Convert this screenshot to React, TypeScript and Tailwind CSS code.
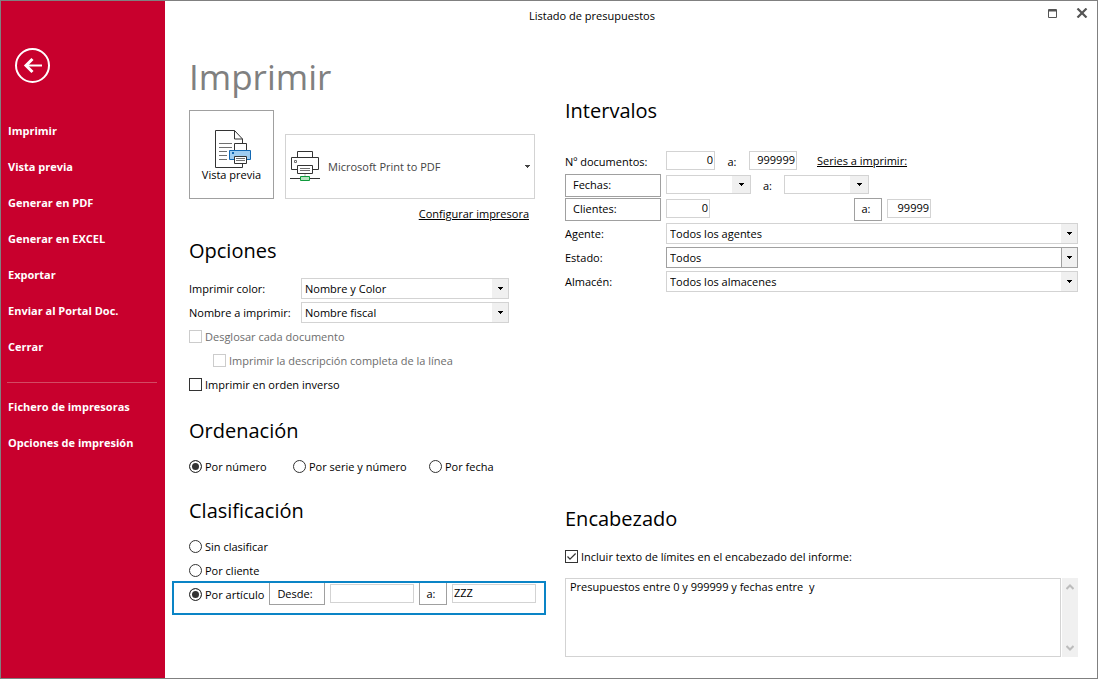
import React from "react";
import clsx from "clsx";

const menuItems = [
  "Imprimir",
  "Vista previa",
  "Generar en PDF",
  "Generar en EXCEL",
  "Exportar",
  "Enviar al Portal Doc.",
  "Cerrar",
];

const setupItems = ["Fichero de impresoras", "Opciones de impresión"];

interface SectionTitleProps {
  children: React.ReactNode;
}

const SectionTitle: React.FC<SectionTitleProps> = ({ children }) => (
  <h2 className="h-8 text-xl leading-8 whitespace-nowrap">{children}</h2>
);

const CaretIcon: React.FC<{ className?: string }> = ({ className }) => (
  <svg
    className={className}
    width="5"
    height="3"
    viewBox="0 0 5 3"
    shapeRendering="crispEdges"
    aria-hidden="true"
  >
    <path d="M0 0h5v1H0zM1 1h3v1H1zM2 2h1v1H2z" fill="currentColor" />
  </svg>
);

interface SelectBoxProps {
  id?: string;
  label?: string;
  value?: string;
  active?: boolean;
  className?: string;
}

const SelectBox: React.FC<SelectBoxProps> = ({
  id,
  label,
  value = "",
  active,
  className,
}) => (
  <div
    className={clsx(
      "relative flex border bg-white",
      active ? "border-[#a0a0a0]" : "border-[#d3d3d3]",
      className
    )}
  >
    <select
      id={id}
      aria-label={label}
      defaultValue={value}
      className="w-full appearance-none bg-transparent pl-[3px] outline-none"
    >
      <option value={value}>{value}</option>
    </select>
    <span
      className={clsx(
        "pointer-events-none absolute inset-y-0 right-0 flex items-center justify-center bg-[#f0f0f0]",
        value ? "w-4" : "w-[18px]",
        active && "border-l border-[#a0a0a0]"
      )}
    >
      <CaretIcon />
    </span>
  </div>
);

interface TextFieldProps {
  label: string;
  value?: string;
  className?: string;
}

const TextField: React.FC<TextFieldProps> = ({ label, value, className }) => (
  <input
    type="text"
    aria-label={label}
    defaultValue={value}
    className={clsx(
      "mb-px h-[19px] border border-[#d3d3d3] bg-white px-px pb-[3px] outline-none",
      className
    )}
  />
);

interface CheckProps {
  label: string;
  checked?: boolean;
  disabled?: boolean;
  className?: string;
}

const Check: React.FC<CheckProps> = ({
  label,
  checked,
  disabled,
  className,
}) => (
  <label
    className={clsx(
      "flex h-6 items-center gap-[3px] whitespace-nowrap",
      disabled && "text-[#6d6d6d]",
      className
    )}
  >
    <span className="relative mb-px flex">
      <input
        type="checkbox"
        defaultChecked={checked}
        disabled={disabled}
        className="peer size-[13px] appearance-none border border-[#333333] disabled:border-[#cccccc]"
      />
      <svg
        className="pointer-events-none absolute inset-0 hidden peer-checked:block"
        viewBox="0 0 13 13"
        fill="none"
        stroke="#333333"
        strokeWidth="1.2"
        aria-hidden="true"
      >
        <path d="M2.5 6.5 5 9.2l5.6-5.7" />
      </svg>
    </span>
    {label}
  </label>
);

interface RadioProps {
  name: string;
  label: string;
  checked?: boolean;
}

const Radio: React.FC<RadioProps> = ({ name, label, checked }) => (
  <label className="flex h-6 items-center gap-[3px] whitespace-nowrap">
    <input
      type="radio"
      name={name}
      defaultChecked={checked}
      className="mb-px size-[13px] appearance-none rounded-full border border-[#333333] bg-white checked:bg-[#333333] checked:shadow-[inset_0_0_0_2px_white]"
    />
    {label}
  </label>
);

const PreviewIcon = () => (
  <svg
    className="ml-[3px] shrink-0"
    width="36"
    height="38"
    viewBox="1 1 36 38"
    fill="none"
    aria-hidden="true"
  >
    <path d="M28.5 14V10l-8-8.5h-19v37h27V34" stroke="#333333" />
    <path d="M20.5 1.5V10h8" stroke="#333333" />
    <path d="M5 14.5h13M5 18.5h13M5 22.5h8M5 26.5h8M5 30.5h8" stroke="#707070" />
    <path d="M20.5 14.5h12v8h-12z" fill="white" stroke="#333333" />
    <path d="M15.5 21.5h21v9h-21z" fill="#9fcdf1" stroke="#1268b3" />
    <path d="M18 23h2v2h-2z" fill="#1268b3" />
    <path d="M20.5 27.5h12v7h-12z" fill="white" stroke="#333333" />
    <path d="M22 29.5h9M22 31.5h9" stroke="#707070" />
  </svg>
);

const PrinterIcon = () => (
  <svg width="30" height="31" viewBox="0 1 30 31" fill="none" aria-hidden="true">
    <path d="M7.5 7V1.5h15V7" stroke="#333333" />
    <path d="M7.5 19.5h-6v-12h27v12h-6" stroke="#333333" />
    <path d="M4.5 10.5h2v2h-2z" stroke="#707070" />
    <path d="M7.5 15.5h15v8h-15z" fill="white" stroke="#333333" />
    <path d="M10 18.5h10M10 20.5h10" stroke="#707070" />
    <path d="M15 24v2" stroke="#b5b5b5" />
    <path d="M0 28.5h10M20 28.5h10" stroke="#333333" />
    <path d="M10.5 26.5h9v4h-9z" fill="#b5e3bf" stroke="#0f9a3c" />
  </svg>
);

const Sidebar = () => (
  <nav className="w-[164px] shrink-0 bg-[#c8002d] pt-[46px] text-white">
    <button type="button" aria-label="Volver" className="ml-[13px] block">
      <svg width="37" height="37" viewBox="0 0 37 37" fill="none" stroke="white">
        <circle cx="18.5" cy="18.5" r="16.5" strokeWidth="2" />
        <path d="M12 18.5h16" strokeWidth="2" />
        <path d="M18.5 12 12 18.5l6.5 6.5" strokeWidth="3" />
      </svg>
    </button>
    <ul className="mt-[29px] text-[11px] font-bold">
      {menuItems.map((item) => (
        <li key={item}>
          <a href="#" className="flex h-9 items-center pl-[7px]">
            {item}
          </a>
        </li>
      ))}
    </ul>
    <hr className="mt-[17px] mr-2 mb-[6px] ml-[6px] border-[#d34a63]" />
    <ul className="text-[11px] font-bold">
      {setupItems.map((item) => (
        <li key={item}>
          <a href="#" className="flex h-9 items-center pl-[7px]">
            {item}
          </a>
        </li>
      ))}
    </ul>
  </nav>
);

const TitleBar = () => (
  <header className="flex h-[30px] items-center">
    <p className="flex-1 text-center">Listado de presupuestos</p>
    <div className="flex w-[78px] items-center justify-end gap-[19px] pr-[9px] pb-[6px]">
      <button type="button" aria-label="Maximizar">
        <svg width="9" height="9" viewBox="0 0 9 9" fill="none" stroke="#555555">
          <path d="M.5.5h8v8h-8zM0 1.5h9M0 2h9" />
        </svg>
      </button>
      <button type="button" aria-label="Cerrar ventana">
        <svg width="12" height="10" viewBox="0 0 12 10" fill="none" stroke="#555555" strokeWidth="2.2">
          <path d="m1.5.5 9 9M10.5.5l-9 9" />
        </svg>
      </button>
    </div>
  </header>
);

const PrintOptions = () => (
  <div>
    <h1 className="mt-[22px] h-12 text-[35px] leading-[48px] text-[#808080]">
      Imprimir
    </h1>
    <div className="mt-[9px] flex items-end gap-[11px]">
      <button
        type="button"
        className="flex h-[89px] w-[85px] flex-col items-center border border-[#a0a0a0] pt-[19px] leading-[14px] whitespace-nowrap"
      >
        <PreviewIcon />
        Vista previa
      </button>
      <button
        type="button"
        className="flex h-[65px] w-[250px] items-center border border-[#d3d3d3] pr-[4px] pl-[4px] text-[#444444]"
      >
        <PrinterIcon />
        <span className="ml-2 flex-1 text-left">Microsoft Print to PDF</span>
        <CaretIcon />
      </button>
    </div>
    <div className="mt-[5px] flex w-[340px] justify-end">
      <a href="#" className="leading-5 underline">
        Configurar impresora
      </a>
    </div>

    <section className="mt-[11px]">
      <SectionTitle>Opciones</SectionTitle>
      <div className="mt-[10px] w-[320px]">
        <div className="flex h-6 items-center">
          <label htmlFor="color" className="w-28">
            Imprimir color:
          </label>
          <SelectBox id="color" value="Nombre y Color" className="mb-px h-[21px] flex-1" />
        </div>
        <div className="flex h-6 items-center">
          <label htmlFor="nombre" className="w-28 whitespace-nowrap">
            Nombre a imprimir:
          </label>
          <SelectBox id="nombre" value="Nombre fiscal" className="mb-px h-[21px] flex-1" />
        </div>
        <Check label="Desglosar cada documento" disabled />
        <Check
          label="Imprimir la descripción completa de la línea"
          disabled
          className="ml-6"
        />
        <Check label="Imprimir en orden inverso" />
      </div>
    </section>

    <section className="mt-[18px]">
      <SectionTitle>Ordenación</SectionTitle>
      <div className="mt-2 flex">
        <div className="w-[104px]">
          <Radio name="orden" label="Por número" checked />
        </div>
        <div className="w-[136px]">
          <Radio name="orden" label="Por serie y número" />
        </div>
        <Radio name="orden" label="Por fecha" />
      </div>
    </section>

    <section className="mt-4">
      <SectionTitle>Clasificación</SectionTitle>
      <div className="mt-2">
        <Radio name="clasificacion" label="Sin clasificar" />
        <Radio name="clasificacion" label="Por cliente" />
        <div className="-mt-[2px] -ml-[17px] flex w-[374px] items-start border-2 border-[#0a84c6] pb-[6px] pl-[15px]">
          <div className="w-20">
            <Radio name="clasificacion" label="Por artículo" checked />
          </div>
          <button type="button" className="h-[22px] w-14 border border-t-0 border-[#a0a0a0] pr-1">
            Desde:
          </button>
          <TextField label="Desde artículo" className="mt-px ml-[5px] w-[84px]" />
          <button type="button" className="ml-[5px] h-[22px] w-7 border border-t-0 border-[#a0a0a0] pr-1">
            a:
          </button>
          <TextField label="Hasta artículo" value="ZZZ" className="mt-px ml-[5px] w-[84px]" />
        </div>
      </div>
    </section>
  </div>
);

const Ranges = () => (
  <section className="mt-[64px]">
    <SectionTitle>Intervalos</SectionTitle>
    <div className="mt-[22px]">
      <div className="flex h-6 items-center">
        <span className="w-[101px] pt-[2px]">Nº documentos:</span>
        <TextField label="Desde documento" value="0" className="w-[49px] text-right" />
        <span className="w-[34px] pt-[2px] text-center">a:</span>
        <TextField label="Hasta documento" value="999999" className="w-12 text-right" />
        <a href="#" className="ml-5 underline">
          Series a imprimir:
        </a>
      </div>
      <div className="flex h-6 items-center">
        <button type="button" className="mr-[5px] h-[23px] w-24 border border-[#a0a0a0] pl-[7px] text-left">
          Fechas:
        </button>
        <SelectBox label="Desde fecha" className="mb-px h-[19px] w-[85px]" />
        <span className="w-[33px] pt-[2px] text-center">a:</span>
        <SelectBox label="Hasta fecha" className="mb-px h-[19px] w-[85px]" />
      </div>
      <div className="flex h-6 items-center">
        <button type="button" className="mr-[5px] h-[23px] w-24 border border-[#a0a0a0] pl-[7px] text-left">
          Clientes:
        </button>
        <TextField label="Desde cliente" value="0" className="w-11 text-right" />
        <button type="button" className="mr-[5px] ml-36 h-[23px] w-7 border border-[#a0a0a0] pr-1">
          a:
        </button>
        <TextField label="Hasta cliente" value="99999" className="w-11 text-right" />
      </div>
      <div className="flex h-6 items-center">
        <label htmlFor="agente" className="w-[101px] pt-[2px]">
          Agente:
        </label>
        <SelectBox id="agente" value="Todos los agentes" className="mt-px h-[21px] flex-1" />
      </div>
      <div className="flex h-6 items-center">
        <label htmlFor="estado" className="w-[101px] pt-[2px]">
          Estado:
        </label>
        <SelectBox id="estado" value="Todos" active className="mt-px h-[21px] flex-1" />
      </div>
      <div className="flex h-6 items-center">
        <label htmlFor="almacen" className="w-[101px] pt-[2px]">
          Almacén:
        </label>
        <SelectBox id="almacen" value="Todos los almacenes" className="mt-px h-[21px] flex-1" />
      </div>
    </div>
  </section>
);

const ReportHeader = () => (
  <section>
    <SectionTitle>Encabezado</SectionTitle>
    <Check
      label="Incluir texto de límites en el encabezado del informe:"
      checked
      className="mt-[10px]"
    />
    <div className="mt-[9px] flex h-[79px] gap-px">
      <textarea
        aria-label="Texto del encabezado"
        defaultValue="Presupuestos entre 0 y 999999 y fechas entre  y"
        className="flex-1 resize-none overflow-hidden border border-[#d3d3d3] px-1 leading-4 outline-none"
      />
      <div className="flex w-4 flex-col items-center justify-between bg-[#f0f0f0] py-[6px] text-[#bcbcbc]">
        <svg width="8" height="6" viewBox="0 0 8 6" fill="none" stroke="currentColor" strokeWidth="2">
          <path d="M.5 5 4 1.5 7.5 5" />
        </svg>
        <svg width="8" height="6" viewBox="0 0 8 6" fill="none" stroke="currentColor" strokeWidth="2">
          <path d="M.5 1 4 4.5 7.5 1" />
        </svg>
      </div>
    </div>
  </section>
);

const App: React.FC = () => {
  return (
    <div className="flex min-h-screen border border-[#808080] bg-white font-['Open_Sans','Noto_Sans',sans-serif] text-[11px] leading-4 text-black">
      <Sidebar />
      <div className="flex flex-1 flex-col">
        <TitleBar />
        <main className="grid flex-1 grid-cols-[376px_1fr] pr-[19px] pb-[21px] pl-6">
          <PrintOptions />
          <div className="flex flex-col justify-between">
            <Ranges />
            <ReportHeader />
          </div>
        </main>
      </div>
    </div>
  );
};

export default App;
